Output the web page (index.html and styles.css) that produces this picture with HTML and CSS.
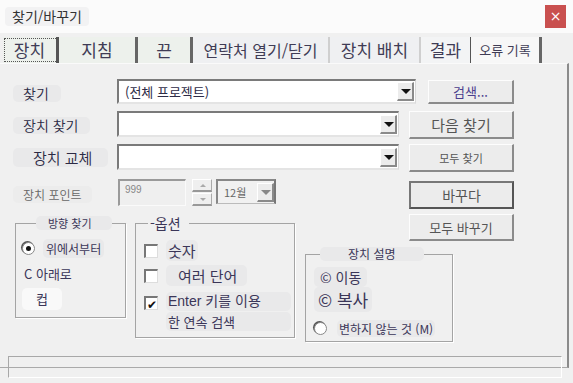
FILE: index.html
```html
<!DOCTYPE html>
<html lang="ko">
<head>
  <meta charset="UTF-8" />
  <title>찾기/바꾸기</title>
  <link rel="stylesheet" href="styles.css">
</head>
<body>
  <div class="titlebar">
    <span class="title">찾기/바꾸기</span>
    <span class="close">×</span>
  </div>

  <div class="tabs">
    <div class="tab tab-active"><span>장치</span></div>
    <div class="tab sep-dark"><span>지침</span></div>
    <div class="tab sep-dark"><span>끈</span></div>
    <div class="tab sep-light small"><span>연락처 열기/닫기</span></div>
    <div class="tab sep-light"><span>장치 배치</span></div>
    <div class="tab sep-thin"><span>결과</span></div>
    <div class="tab sep-dark tiny"><span>오류 기록</span></div>
  </div>

  <div class="panel">
    <div class="row-find">
      <div class="label-col"><span class="chip lbl">찾기</span></div>
      <div class="combo combo-wide">
        <span class="combo-text">(전체 프로젝트)</span>
        <span class="drop"></span>
      </div>
      <button class="btn btn-search">검색...</button>
    </div>

    <div class="mid">
      <div class="mid-left">
        <div class="mid-row">
          <div class="label-col"><span class="chip lbl">장치 찾기</span></div>
          <div class="combo"><span class="combo-text"></span><span class="drop"></span></div>
        </div>
        <div class="mid-row">
          <div class="label-col"><span class="chip lbl lbl-indent">장치 교체</span></div>
          <div class="combo"><span class="combo-text"></span><span class="drop"></span></div>
        </div>
        <div class="mid-row point-row">
          <div class="label-col"><span class="chip lbl lbl-dim">장치 포인트</span></div>
          <div class="num-box">999</div>
          <div class="spinner">
            <span class="spin spin-up"></span>
            <span class="spin spin-down"></span>
          </div>
          <div class="month-box">
            <span>12월</span>
            <span class="drop drop-dim"></span>
          </div>
        </div>
      </div>
      <div class="mid-right">
        <button class="btn">다음 찾기</button>
        <button class="btn btn-small">모두 찾기</button>
        <button class="btn btn-default">바꾸다</button>
      </div>
    </div>

    <div class="bottom">
      <fieldset class="group group-dir">
        <legend class="chip">방향 찾기</legend>
        <div class="opt"><span class="radio radio-on"></span><span class="chip opt-small">위에서부터</span></div>
        <div class="opt opt-plain">C 아래로</div>
        <div class="opt"><span class="chip chip-white cup">컵</span></div>
      </fieldset>

      <fieldset class="group group-opt">
        <legend>-옵션</legend>
        <div class="opt"><span class="check"></span><span class="chip opt-big">숫자</span></div>
        <div class="opt"><span class="check"></span><span class="chip opt-big words">여러 단어</span></div>
        <div class="opt opt-two">
          <span class="check check-on">✔</span>
          <div class="two-lines">
            <span class="chip line-a">Enter 키를 이용</span>
            <span class="chip">한 연속 검색</span>
          </div>
        </div>
      </fieldset>

      <div class="right-col">
        <button class="btn btn-small btn-all">모두 바꾸기</button>
        <fieldset class="group group-desc">
          <legend class="chip">장치 설명</legend>
          <div class="opt"><span class="chip move">© 이동</span></div>
          <div class="opt"><span class="chip copy">© 복사</span></div>
          <div class="opt"><span class="radio"></span><span class="chip keep">변하지 않는 것 (M)</span></div>
        </fieldset>
      </div>
    </div>

    <div class="status"></div>
  </div>
</body>
</html>
```

FILE: styles.css
```css
body {
  margin: 0;
  width: 573px;
  height: 383px;
  overflow: hidden;
  background: #f0f0f0;
  font-family: "Noto Sans CJK KR", "Noto Sans", sans-serif;
  color: #3b3658;
}

.titlebar {
  height: 33px;
  background: #fbfbfb;
  display: flex;
  align-items: center;
  justify-content: space-between;
  padding: 0 7px 0 5px;
}

.title {
  background: #f2f2f3;
  border-radius: 4px;
  padding: 0 7px;
  font-size: 14px;
  line-height: 19px;
  color: #333;
}

.close {
  width: 21px;
  height: 23px;
  background: #c9504f;
  color: #fff;
  font-family: "DejaVu Sans", sans-serif;
  font-size: 14px;
  line-height: 23px;
  text-align: center;
}

/* tabs */
.tabs {
  display: flex;
  height: 26px;
  margin-top: 4px;
  padding-left: 3px;
}

.tab {
  display: flex;
  align-items: center;
  justify-content: center;
  font-size: 17px;
  line-height: 24px;
  background: #edf1ec;
  color: #3f3c55;
  border-right: 2px solid #dcdcdc;
}

.tab:nth-child(1) { width: 53px; }
.tab:nth-child(2) { width: 76px; }
.tab:nth-child(3) { width: 52px; }
.tab:nth-child(4) { width: 135px; background: #eff0f2; }
.tab:nth-child(5) { width: 89px; background: #eff0f2; }
.tab:nth-child(6) { width: 49px; background: #f3f4f5; }
.tab:nth-child(7) { width: 68px; background: #f7f7f7; }

.tab-active {
  outline: 1px dotted #555;
  outline-offset: -2px;
  border-right: 3px solid #555;
}

.sep-dark { border-right: 3px solid #666; }
.sep-light { border-right: 2px solid #cfcfcf; }
.sep-thin { border-right: 1px solid #555; }

.tab.small { font-size: 16px; }
.tab.tiny { font-size: 13px; }

/* panel */
.panel {
  height: 305px;
  padding-top: 15px;
  border-top: 1px solid #fafafa;
  border-right: 2px solid #8b8b8b;
  border-bottom: 1px solid #aaa;
  width: 569px;
  box-sizing: border-box;
}

.chip {
  background: #e9e9ea;
  border-radius: 5px;
}

.chip-white {
  background: #f9f9f9;
}

.row-find {
  display: flex;
  align-items: center;
  height: 25px;
}

.label-col {
  width: 104px;
  margin-left: 13px;
  flex-shrink: 0;
}

.lbl {
  display: inline-block;
  font-size: 14px;
  line-height: 17px;
  padding: 0 12px 0 10px;
  color: #2c2a44;
  font-weight: 350;
}

.lbl-indent {
  padding: 1px 16px 1px 20px;
  font-size: 15px;
}

.lbl-dim {
  font-size: 12px;
  color: #666;
  background: #ececec;
  padding: 0 10px;
}

.combo {
  width: 282px;
  height: 26px;
  box-sizing: border-box;
  background: #fff;
  border-top: 2px solid #7a7a7a;
  border-left: 2px solid #7a7a7a;
  border-bottom: 2px solid #e4e4e4;
  border-right: 1px solid #d8d8d8;
  display: flex;
  align-items: center;
}

.combo-wide {
  width: 299px;
  height: 25px;
}

.combo-text {
  flex: 1;
  font-size: 13px;
  padding-left: 6px;
  color: #2d2b47;
}

.drop {
  width: 17px;
  height: 19px;
  margin-right: 1px;
  background: #ececec;
  border-top: 1px solid #fff;
  border-left: 1px solid #fff;
  border-right: 2px solid #8a8a8a;
  border-bottom: 2px solid #8a8a8a;
  box-sizing: border-box;
  position: relative;
}

.drop::after {
  content: "";
  position: absolute;
  left: 3px;
  top: 6px;
  border-left: 5px solid transparent;
  border-right: 5px solid transparent;
  border-top: 5px solid #111;
}

.drop-dim {
  margin-right: 0;
}

.drop-dim::after {
  border-top-color: #888;
}

.btn {
  width: 86px;
  height: 24px;
  margin-left: 12px;
  padding: 0;
  font-family: inherit;
  font-size: 14px;
  color: #555;
  background: #ececec;
  border-top: 1px solid #fdfdfd;
  border-left: 1px solid #fdfdfd;
  border-right: 2px solid #8b8b8b;
  border-bottom: 2px solid #8b8b8b;
  box-sizing: border-box;
}

.btn-search {
  color: #4b3f8e;
  font-size: 13px;
}

/* middle rows */
.mid {
  display: flex;
  margin-top: 7px;
}

.mid-left {
  display: flex;
  flex-direction: column;
  gap: 7px;
}

.mid-row {
  display: flex;
  align-items: center;
  height: 26px;
}

.point-row {
  height: 27px;
  margin-top: 2px;
}

.num-box {
  width: 68px;
  height: 27px;
  box-sizing: border-box;
  background: #efefef;
  border-top: 2px solid #9a9a9a;
  border-left: 2px solid #9a9a9a;
  border-bottom: 1px solid #fafafa;
  border-right: 1px solid #fafafa;
  font-family: "Liberation Sans", sans-serif;
  font-size: 10px;
  color: #888;
  padding: 3px 0 0 5px;
  margin-left: 1px;
}

.spinner {
  display: flex;
  flex-direction: column;
  margin-left: 6px;
  gap: 1px;
}

.spin {
  width: 20px;
  height: 13px;
  box-sizing: border-box;
  background: #efefef;
  border-top: 1px solid #fff;
  border-left: 1px solid #fff;
  border-right: 1px solid #aaa;
  border-bottom: 2px solid #999;
  position: relative;
}

.spin::after {
  content: "";
  position: absolute;
  left: 7px;
  top: 4px;
  border-left: 3px solid transparent;
  border-right: 3px solid transparent;
}

.spin-up::after { border-bottom: 3px solid #aaa; }
.spin-down::after { border-top: 3px solid #aaa; }

.month-box {
  width: 60px;
  height: 25px;
  box-sizing: border-box;
  margin-left: 4px;
  margin-top: -2px;
  border-top: 2px solid #888;
  border-left: 2px solid #888;
  border-right: 2px solid #777;
  border-bottom: 1px solid #bbb;
  background: #f1f1f1;
  display: flex;
  align-items: center;
  justify-content: space-between;
  font-size: 11px;
  color: #666;
  padding-left: 6px;
}

.mid-right {
  display: flex;
  flex-direction: column;
  margin-left: 10px;
}

.mid-right .btn {
  width: 105px;
  height: 28px;
  margin-left: 0;
  margin-bottom: 5px;
  font-size: 15px;
}

.mid-right .btn-small {
  font-size: 11px;
  margin-bottom: 9px;
}

.mid-right .btn-default {
  border-top: 2px solid #777;
  border-left: 2px solid #777;
  border-right: 2px solid #555;
  border-bottom: 2px solid #555;
  margin-bottom: 0;
  font-size: 14px;
}

/* groups */
.bottom {
  display: flex;
  align-items: flex-start;
  margin-top: 5px;
}

.group {
  margin: 0;
  padding: 0 0 0 6px;
  border: 1px solid #a4a4a4;
  box-shadow: 1px 1px 0 #fff;
  box-sizing: border-box;
  display: flex;
  flex-direction: column;
}

.group legend {
  font-size: 11px;
  line-height: 14px;
  padding: 0 20px 0 12px;
  margin-left: 14px;
}

.group-dir {
  width: 111px;
  height: 102px;
  margin: 2px 0 0 15px;
}

.group-opt {
  width: 160px;
  height: 124px;
  margin: 0 0 0 9px;
  padding-left: 8px;
}

.group-opt legend {
  font-size: 14px;
  line-height: 18px;
  padding: 0 8px 0 2px;
  margin-left: 4px;
}

.opt {
  display: flex;
  align-items: center;
  gap: 8px;
  height: 25px;
  font-size: 12px;
}

.group-dir .opt:first-of-type {
  margin-top: 6px;
}

.opt-small {
  padding: 1px 3px;
}

.opt-plain {
  font-size: 13px;
  padding-left: 2px;
}

.cup {
  padding: 0 14px;
  font-size: 13px;
  line-height: 22px;
}

.radio {
  width: 11px;
  height: 11px;
  border-radius: 50%;
  background: #fff;
  border: 1px solid #888;
  box-shadow: -1px -1px 0 #555;
  position: relative;
  flex-shrink: 0;
}

.radio-on::after {
  content: "";
  position: absolute;
  left: 3px;
  top: 3px;
  width: 5px;
  height: 5px;
  border-radius: 50%;
  background: #111;
}

.check {
  width: 14px;
  height: 14px;
  box-sizing: border-box;
  background: #fff;
  border-top: 2px solid #777;
  border-left: 2px solid #777;
  border-right: 1px solid #ddd;
  border-bottom: 1px solid #ddd;
  flex-shrink: 0;
  font-size: 12px;
  line-height: 11px;
  color: #111;
  text-align: center;
}

.group-opt .opt:first-of-type {
  margin-top: 6px;
}

.opt-big {
  font-size: 15px;
  padding: 0 2px;
}

.words {
  padding: 0 10px 0 12px;
}

.opt-two {
  height: auto;
  align-items: flex-start;
  margin-top: 4px;
}

.opt-two .check {
  margin-top: 4px;
}

.two-lines {
  display: flex;
  flex-direction: column;
  gap: 1px;
  font-size: 13px;
}

.two-lines .chip {
  padding: 0 2px;
  line-height: 19px;
}

.line-a {
  padding-right: 30px !important;
  font-family: "Liberation Sans", "Noto Sans CJK KR", sans-serif;
  font-size: 14px;
}

.right-col {
  display: flex;
  flex-direction: column;
  margin-left: 10px;
}

.btn-all {
  width: 105px;
  height: 27px;
  margin-left: 104px;
  font-size: 13px;
}

.group-desc {
  width: 148px;
  height: 95px;
  margin-top: 6px;
  padding-left: 8px;
}

.group-desc legend {
  font-size: 12px;
  padding: 0 28px;
  margin-left: 6px;
}

.move {
  font-size: 14px;
  padding: 0 6px;
  margin-top: 7px;
}

.copy {
  font-size: 17px;
  padding: 0 4px;
  margin-top: 2px;
}

.group-desc .opt:last-child {
  margin-top: 5px;
  gap: 10px;
}

.keep {
  font-size: 12px;
  padding: 0 2px;
}

.status {
  margin: 14px 0 0 8px;
  width: 554px;
  height: 22px;
  box-sizing: border-box;
  border-top: 1px solid #a8a8a8;
  border-left: 1px solid #a8a8a8;
  border-bottom: 1px solid #fff;
  border-right: 1px solid #fff;
}
```
